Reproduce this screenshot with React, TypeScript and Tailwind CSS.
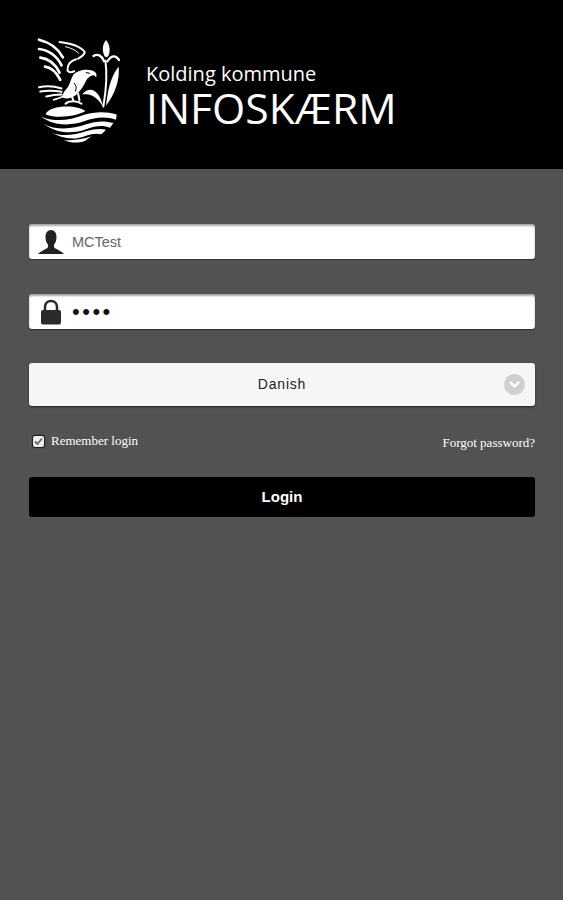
const sans = { fontFamily: '"Liberation Sans", Arial, sans-serif' };

function Logo() {
  return (
    <svg width="83" height="107" viewBox="50 50 250 320" fill="none" stroke="#fff" strokeLinecap="round" strokeLinejoin="round">
      {/* left wing feathers */}
      <path d="M56 57C84 64 112 80 128 110" strokeWidth="8" />
      <path d="M56 85C84 88 108 104 124 134" strokeWidth="8" />
      <path d="M60 111C84 114 104 128 118 156" strokeWidth="8" />
      <path d="M74 138C92 140 108 154 120 178" strokeWidth="8" />
      {/* right wing */}
      <path d="M118 64C150 68 180 76 194 94C192 104 184 108 174 114" strokeWidth="6" />
      <path d="M136 78C152 82 166 88 176 98" strokeWidth="3" />
      <path d="M168 116C150 120 140 134 142 150C146 156 154 156 162 152" strokeWidth="6" />
      {/* body and head */}
      <path fill="#fff" stroke="none" d="M160 162C172 148 200 144 216 150C226 153 232 160 228 170L222 164C212 164 204 170 198 180C190 198 178 216 164 226C152 234 140 236 128 232C124 224 132 212 140 204C148 196 152 174 160 162Z" />
      <path d="M198 156L208 158" stroke="#000" strokeWidth="3" />
      <path d="M162 188C168 194 170 202 166 212" stroke="#000" strokeWidth="3" />
      {/* tail */}
      <path d="M56 200C76 196 100 196 124 204" strokeWidth="6" />
      <path d="M60 213C80 210 102 210 124 214" strokeWidth="6" />
      <path d="M78 228C92 224 108 222 124 222" strokeWidth="6" />
      <path d="M100 238C108 236 118 232 128 228" strokeWidth="5" />
      {/* legs */}
      <path d="M156 230L160 242M136 250C146 240 170 240 184 250M174 220L178 240" strokeWidth="6" />
      {/* iris flower */}
      <path fill="#fff" stroke="none" d="M258 58C268 70 272 86 266 104C262 112 256 112 252 104C245 86 248 70 258 58Z" />
      <path d="M220 106C234 98 246 106 252 122M297 118C286 102 274 104 262 122" strokeWidth="7" />
      <path d="M256 120C262 160 258 210 250 258" strokeWidth="6" />
      {/* leaves */}
      <path fill="#fff" stroke="none" d="M296 138C300 180 284 222 258 256C262 224 268 172 296 138Z" />
      <path fill="#fff" stroke="none" d="M186 222C206 196 238 204 250 262C238 236 214 216 186 222Z" />
      {/* hill */}
      <path fill="#fff" stroke="none" d="M76 282C80 266 112 258 140 258C164 258 186 264 196 272C170 288 110 296 76 282Z" />
      {/* waves */}
      <path fill="#fff" stroke="none" d="M62 288C100 306 150 300 190 284C226 272 262 274 290 282L288 298C258 288 226 290 194 302C150 318 98 316 62 288Z" />
      <path fill="#fff" stroke="none" d="M70 310C104 330 156 328 198 312C226 302 254 300 280 308L270 322C248 314 226 316 200 326C158 342 108 340 70 310Z" />
      <path fill="#fff" stroke="none" d="M96 338C124 348 160 346 200 332C222 326 242 324 258 328L244 342C230 338 216 340 198 346C164 360 128 356 96 338Z" />
      <path fill="#fff" stroke="none" d="M130 358C154 362 184 358 214 348L194 362C172 370 150 368 130 358Z" />
    </svg>
  );
}

function UserIcon() {
  return (
    <svg width="28" height="28" viewBox="0 0 28 28" fill="#222">
      <path d="M14 2C17.500 2 19.500 5 19.500 9C19.500 12.500 18.500 15 17 16.500V19C17 20.500 23 22 27 26H1C5 22 11 20.500 11 19V16.500C9.500 15 8.500 12.500 8.500 9C8.500 5 10.500 2 14 2Z" />
    </svg>
  );
}

function LockIcon() {
  return (
    <svg width="22" height="26" viewBox="0 0 22 26">
      <path d="M5 12V8C5 4.500 7.500 2 11 2C14.500 2 17 4.500 17 8V12" fill="none" stroke="#2b2b2b" strokeWidth="2.500" />
      <rect x="1" y="11" width="20" height="14.500" rx="2" fill="#2b2b2b" />
    </svg>
  );
}

export default function App() {
  return (
    <div className="min-h-screen bg-[#525252]" style={sans}>
      <header className="h-[169px] bg-black flex items-start pl-[37px] pt-[37px]">
        <Logo />
        <div className="ml-[26px] mt-[24px] text-white" style={{ fontFamily: '"Open Sans", sans-serif' }}>
          <div className="text-[20px] leading-[25px] font-medium">Kolding kommune</div>
          <div className="text-[42.7px] leading-[44px]">INFOSKÆRM</div>
        </div>
      </header>

      <main className="px-[29px] pr-[28px] pt-[55px]">
        <div className="h-[35px] bg-white rounded-[3px] flex items-center pl-[8px] shadow-[inset_0_2px_2px_rgba(0,0,0,0.35),0_1px_1px_rgba(0,0,0,0.4)]">
          <UserIcon />
          <input readOnly defaultValue="MCTest" className="ml-[7px] pt-[2px] flex-1 text-[14.5px] text-[#666] outline-none bg-transparent" />
        </div>

        <div className="mt-[35px] h-[35px] bg-white rounded-[3px] flex items-center pl-[11px] shadow-[inset_0_2px_2px_rgba(0,0,0,0.35),0_1px_1px_rgba(0,0,0,0.4)]">
          <LockIcon />
          <span className="ml-[10px] text-[22px] leading-none tracking-[2.5px] text-[#111]">••••</span>
        </div>

        <div className="relative mt-[34px] h-[43px] bg-[#f6f6f6] rounded-[3px] flex items-center justify-center text-[14px] tracking-[0.8px] text-[#222] shadow-[0_1px_2px_rgba(0,0,0,0.6)]">
          Danish
          <span className="absolute right-[10px] top-[11px] w-[21px] h-[21px] rounded-full bg-[#cfcfcf] flex items-center justify-center">
            <svg width="13" height="9" viewBox="0 0 13 9" fill="none" stroke="#fff" strokeWidth="2.500">
              <path d="M2 2L6.500 6.500L11 2" />
            </svg>
          </span>
        </div>

        <div className="mt-[27px] h-[18px] flex justify-between text-white text-[13px]" style={{ fontFamily: '"Liberation Serif", serif' }}>
          <div className="flex items-start pl-[4px]">
            <span className="mt-[3px] w-[11px] h-[11px] bg-[#eee] rounded-[2px] flex items-center justify-center shadow-[0_0_1px_1px_rgba(0,0,0,0.7)]">
              <svg width="9" height="9" viewBox="0 0 9 9" fill="none" stroke="#666" strokeWidth="1.800">
                <path d="M1 4.500L3.500 7L8 1.500" />
              </svg>
            </span>
            <span className="ml-[7px] leading-[16px]">Remember login</span>
          </div>
          <span className="leading-[16px] mt-[2px]">Forgot password?</span>
        </div>

        <button className="mt-[26px] block w-full h-[40px] bg-black rounded-[3px] text-white font-bold text-[15px]">Login</button>
      </main>
    </div>
  );
}
